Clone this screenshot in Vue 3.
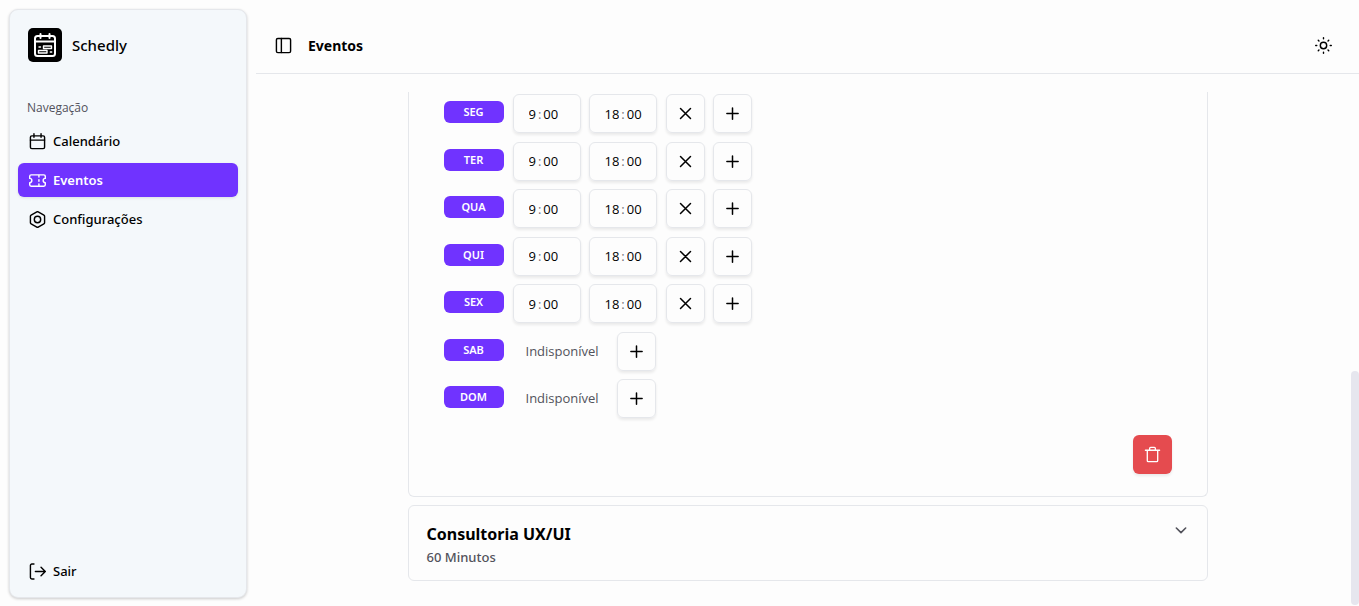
<script setup>
import { ref } from 'vue'

const nav = [
  { label: 'Calendário', icon: 'calendar' },
  { label: 'Eventos', icon: 'ticket', active: true },
  { label: 'Configurações', icon: 'bolt' },
]

const days = ref([
  ...['SEG', 'TER', 'QUA', 'QUI', 'SEX'].map((name) => ({
    name,
    slots: [
      { label: 'início', hour: '9', minute: '00' },
      { label: 'fim', hour: '18', minute: '00' },
    ],
  })),
  { name: 'SAB', slots: [] },
  { name: 'DOM', slots: [] },
])
</script>

<template>
  <div class="layout">
    <div class="side-wrap">
      <aside class="sidebar">
        <div class="brand">
          <svg class="logo" viewBox="0 0 34 34" aria-hidden="true">
            <rect width="34" height="34" rx="5" />
            <g fill="none" stroke="#fff" stroke-width="2" stroke-linecap="round">
              <rect x="7" y="8" width="20" height="20" rx="2.500" />
              <path d="M7 13.500h20M12.500 6v4M21.500 6v4" />
              <path d="M11 19h1.500M15.500 18h8v2.500h-8zM10.500 22.500h8.500V25h-8.500zM22.300 24h1.400" stroke-width="1.400" />
            </g>
          </svg>
          <span>Schedly</span>
        </div>
        <nav class="nav" aria-labelledby="nav-title">
          <p id="nav-title" class="nav-title">Navegação</p>
          <a v-for="item in nav" :key="item.label" href="#" class="nav-link" :class="{ active: item.active }">
            <svg class="icon" viewBox="0 0 24 24" aria-hidden="true">
              <template v-if="item.icon === 'calendar'">
                <rect x="2" y="4" width="20" height="18" rx="2" />
                <path d="M7 1v5M17 1v5M2 10h20" />
              </template>
              <template v-else-if="item.icon === 'ticket'">
                <path d="M1 9a3 3 0 0 1 0 6v3a2 2 0 0 0 2 2h18a2 2 0 0 0 2-2v-3a3 3 0 0 1 0-6V6a2 2 0 0 0-2-2H3a2 2 0 0 0-2 2Z" />
                <path d="M14 5v2M14 17v2M14 11v2" />
              </template>
              <template v-else>
                <path d="M22 16.500v-9a2 2 0 0 0-1-1.730l-8-4.500a2 2 0 0 0-2 0l-8 4.500A2 2 0 0 0 2 7.500v9a2 2 0 0 0 1 1.730l8 4.500a2 2 0 0 0 2 0l8-4.500A2 2 0 0 0 22 16.500z" />
                <circle cx="12" cy="12" r="4.500" />
              </template>
            </svg>
            {{ item.label }}
          </a>
        </nav>
        <button type="button" class="nav-link sign-out">
          <svg class="icon" viewBox="0 0 24 24" aria-hidden="true">
            <path d="M7 1.500H4a2 2 0 0 0-2 2v17a2 2 0 0 0 2 2h3M9 12h14M17 6l6 6-6 6" />
          </svg>
          Sair
        </button>
      </aside>
    </div>

    <div class="page">
      <header class="topbar">
        <button type="button" class="plain" aria-label="Alternar menu">
          <svg class="icon" viewBox="0 0 24 24" aria-hidden="true">
            <rect x="2" y="2" width="20" height="20" rx="2" />
            <path d="M9 2v20" />
          </svg>
        </button>
        <h1>Eventos</h1>
        <button type="button" class="plain theme" aria-label="Alternar tema">
          <svg class="icon" viewBox="0 0 24 24" aria-hidden="true">
            <circle cx="12" cy="12" r="4.500" />
            <path d="M12 1v1.500M12 21.500v1.500M1 12h1.500M21.500 12h1.500M4.600 4.600l1 1M18.400 18.400l1 1M4.600 19.400l1-1M18.400 5.600l1-1" />
          </svg>
        </button>
      </header>

      <main class="content">
        <section class="card open" aria-label="Disponibilidade">
          <ul class="days">
            <li v-for="day in days" :key="day.name" class="day">
              <span class="badge">{{ day.name }}</span>
              <template v-if="day.slots.length">
                <div class="times">
                  <div v-for="slot in day.slots" :key="slot.label" class="time">
                    <input v-model="slot.hour" :style="{ width: slot.hour.length + 'ch' }" :aria-label="`${day.name} hora ${slot.label}`" />
                    <span>:</span>
                    <input v-model="slot.minute" :style="{ width: slot.minute.length + 'ch' }" :aria-label="`${day.name} minuto ${slot.label}`" />
                  </div>
                </div>
                <button type="button" class="square" aria-label="Remover horário">
                  <svg class="icon" viewBox="0 0 24 24" aria-hidden="true"><path d="M4 4l16 16M20 4L4 20" /></svg>
                </button>
              </template>
              <span v-else class="off">Indisponível</span>
              <button type="button" class="square add" aria-label="Adicionar horário">
                <svg class="icon" viewBox="0 0 24 24" aria-hidden="true"><path d="M3 12h18M12 3v18" /></svg>
              </button>
            </li>
          </ul>
          <button type="button" class="square delete" aria-label="Excluir evento">
            <svg class="icon" viewBox="0 0 18 18" aria-hidden="true">
              <path d="M1.500 4.500h15M6 4.500v-2a1 1 0 0 1 1-1h4a1 1 0 0 1 1 1v2M3.500 4.500v11a1 1 0 0 0 1 1h9a1 1 0 0 0 1-1v-11" />
            </svg>
          </button>
        </section>

        <section class="card closed">
          <div>
            <h2>Consultoria UX/UI</h2>
            <p>60 Minutos</p>
          </div>
          <button type="button" class="plain expand" aria-label="Expandir">
            <svg viewBox="0 0 24 24" aria-hidden="true"><path d="M5 9l7 7 7-7" /></svg>
          </button>
        </section>
      </main>
      <div class="scroll-thumb"></div>
    </div>
  </div>
</template>

<style>
body {
  margin: 0;
  background: #fdfdfd;
}
</style>

<style scoped>
.layout {
  display: flex;
  min-height: 100vh;
  font-family: "Noto Sans", "Open Sans", sans-serif;
  font-size: 13px;
  line-height: 20px;
  color: #000;
}
.layout *,
.layout {
  box-sizing: border-box;
}
h1, h2, p, ul {
  margin: 0;
  padding: 0;
}
button, input {
  font: inherit;
  color: inherit;
  margin: 0;
  padding: 0;
  border: 0;
  background: none;
}
svg {
  display: block;
  flex: none;
  fill: none;
  stroke: currentColor;
  stroke-width: 2;
  stroke-linecap: round;
  stroke-linejoin: round;
}
.icon {
  width: 17px;
  height: 17px;
}
.side-wrap {
  display: flex;
  flex: none;
  width: 256px;
  padding: 9px 9px 8px;
}
.sidebar {
  display: flex;
  flex-direction: column;
  flex: 1;
  padding: 8px 8px 9px;
  border: 1px solid #e5e7eb;
  border-radius: 9px;
  background: #f4f8fb;
  box-shadow: 0 1px 3px rgba(0, 0, 0, 0.2);
}
.brand {
  display: flex;
  align-items: center;
  gap: 10px;
  padding: 10px;
  font-size: 15px;
  font-weight: 500;
}
.logo {
  width: 34px;
  height: 34px;
  fill: #000;
  stroke: none;
}
.nav {
  display: flex;
  flex-direction: column;
  gap: 5px;
  padding-top: 27px;
}
.nav-title {
  padding: 0 9px;
  margin-bottom: 2px;
  font-family: "Open Sans", sans-serif;
  font-size: 12px;
  line-height: 18px;
  color: #52525b;
}
.nav-link {
  display: flex;
  align-items: center;
  gap: 7px;
  height: 34px;
  padding: 0 11px;
  border-radius: 6px;
  font-weight: 500;
  color: #000;
  text-decoration: none;
}
.nav-link.active {
  background: #7033ff;
  color: #fff;
  font-weight: 600;
  box-shadow: 0 1px 3px rgba(0, 0, 0, 0.1);
}
.sign-out {
  margin-top: auto;
}
.page {
  position: relative;
  flex: 1;
  min-width: 0;
}
.topbar {
  display: flex;
  align-items: center;
  gap: 16px;
  height: 74px;
  padding: 18px 27px 0 19px;
  border-bottom: 1px solid #e5e7eb;
}
h1 {
  font-size: 14px;
  font-weight: 700;
}
.theme {
  margin-left: auto;
}
.content {
  display: flex;
  flex-direction: column;
  gap: 8px;
  max-width: 800px;
  margin: 18px auto 0;
}
.card {
  border: 1px solid #e5e7eb;
  border-radius: 6px;
}
.open {
  display: flex;
  flex-direction: column;
  padding: 2px 35px 22px;
  border-top: 0;
  border-top-left-radius: 0;
  border-top-right-radius: 0;
}
.days {
  display: grid;
  align-content: space-between;
  min-height: 324px;
  list-style: none;
}
.day {
  display: flex;
  align-items: flex-start;
}
.badge {
  width: 60px;
  margin: 7px 9px 0 0;
  border-radius: 6px;
  background: #7033ff;
  color: #fff;
  font-size: 11px;
  font-weight: 600;
  line-height: 22px;
  text-align: center;
}
.times {
  display: flex;
  gap: 8px;
  margin-right: 9px;
}
.time {
  display: flex;
  align-items: center;
  gap: 2px;
  width: 68px;
  height: 39px;
  padding: 0 15px;
  border: 1px solid #e5e7eb;
  border-radius: 6px;
  font-family: "Open Sans", sans-serif;
  box-shadow: 0 2px 3px rgba(0, 0, 0, 0.08);
}
.time span {
  color: #71717a;
}
.square {
  display: grid;
  place-items: center;
  width: 39px;
  height: 39px;
  border: 1px solid #e5e7eb;
  border-radius: 6px;
  box-shadow: 0 2px 3px rgba(0, 0, 0, 0.08);
}
.day .square svg {
  width: 15px;
  height: 15px;
  stroke-width: 2.4;
}
.square + .add {
  margin-left: 8px;
}
.off {
  width: 104px;
  padding-left: 13px;
  font-family: "Open Sans", sans-serif;
  line-height: 39px;
  color: #52525b;
}
.delete {
  align-self: flex-end;
  margin-top: 17px;
  border: 0;
  background: #e54b4f;
  color: #fff;
}
.delete svg {
  stroke-width: 1.4;
}
.closed {
  display: flex;
  justify-content: space-between;
  align-items: flex-start;
  padding: 16px 18px 12px;
}
h2 {
  font-size: 16px;
  font-weight: 700;
  line-height: 24px;
}
.closed p {
  line-height: 22px;
  font-weight: 500;
  color: #52525b;
}
.expand {
  color: #52525b;
}
.expand svg {
  width: 16px;
  height: 16px;
  stroke-width: 2.4;
}
.scroll-thumb {
  position: absolute;
  right: 0;
  bottom: 1px;
  width: 8px;
  height: 234px;
  border-radius: 4px;
  background: #e6e6ee;
}
</style>
